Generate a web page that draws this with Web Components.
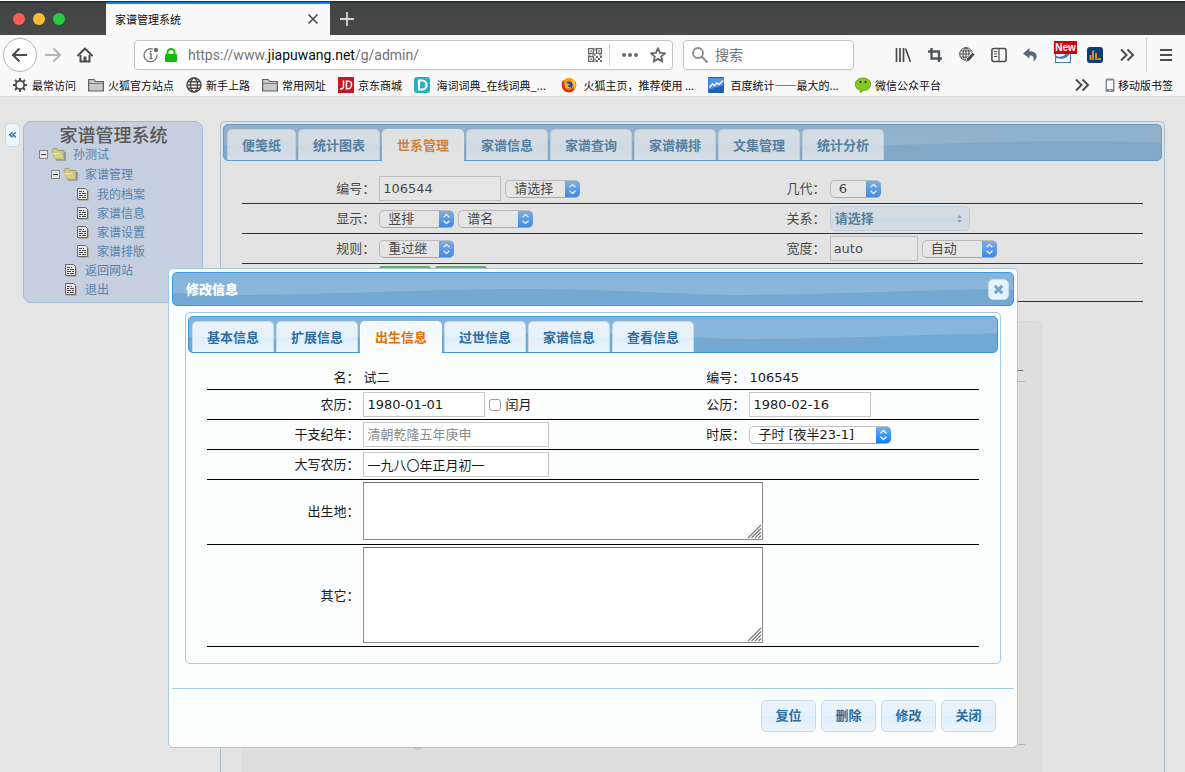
<!DOCTYPE html>
<html lang="zh-CN">
<head>
<meta charset="utf-8">
<title>家谱管理系统</title>
<style>
  html, body { margin: 0; height: 100%; }
  body { font: 13px/20px "DejaVu Sans", "Noto Sans CJK SC", sans-serif; color: #1a1a1a; background: #fff; overflow: hidden; }
</style>
</head>
<body>
<browser-window>
  <genealogy-page></genealogy-page>
</browser-window>

<script>
const wave = `url("data:image/svg+xml,%3Csvg xmlns='http://www.w3.org/2000/svg' width='500' height='38'%3E%3Cdefs%3E%3ClinearGradient id='a' x2='0' y2='1'%3E%3Cstop stop-color='%2386b3d9'/%3E%3Cstop offset='.6' stop-color='%238ab7da'/%3E%3C/linearGradient%3E%3C/defs%3E%3Crect width='500' height='38' fill='url(%23a)'/%3E%3Cpath d='M0 20C20 21 40 22 61 22C160 22 250 16 348 16C400 16 450 18 500 20V38H0z' fill='%2371a8d4'/%3E%3C/svg%3E")`;
const glass = 'linear-gradient(#eaf3fc, #e6f1fb 50%, #dceefc 50%, #edf5fc)';
const steps = (a, b) => `url("data:image/svg+xml,%3Csvg xmlns='http://www.w3.org/2000/svg' width='15' height='18'%3E%3Cdefs%3E%3ClinearGradient id='a' x2='0' y2='1'%3E%3Cstop stop-color='%23${a}'/%3E%3Cstop offset='1' stop-color='%23${b}'/%3E%3C/linearGradient%3E%3C/defs%3E%3Crect width='15' height='18' fill='url(%23a)'/%3E%3Cpath d='M4.5 7.3L7.5 4.4L10.5 7.3M4.5 10.7L7.5 13.6L10.5 10.7' fill='none' stroke='white' stroke-width='1.4'/%3E%3C/svg%3E")`;

const controls = `
  input, select, textarea { font: inherit; color: inherit; margin: 0; }
  input[type=text] { height: 25px; border: 1px solid #c8c8c8; background: #fff; padding: 0 3px; border-radius: 0; width: 122px; }
  input.small { width: 88px; }
  input.long { width: 186px; }
  input::placeholder { color: #8c8c8c; opacity: 1; }
  input[type=checkbox] { appearance: none; width: 12px; height: 12px; border: 1px solid #9c9c9c; border-radius: 3px; background: #fff; }
  select { appearance: none; width: 75px; height: 18px; line-height: 16px; padding: 0 18px 0 8px; border: 1px solid #c2c2c2; border-bottom-color: #aaa; border-right: 0; border-radius: 5px;
    background: ${steps('6db3fa', '0d79fb')} no-repeat right center / 15px 18px border-box #fff; }
  select.tiny { width: 51px; }
  select.wide { width: 142px; }
  select.glass { width: 140px; height: 25px; line-height: 23px; padding: 0 4px; border: 1px solid #c5dbec; font-weight: bold; color: #2e6e9e;
    background: url("data:image/svg+xml,%3Csvg xmlns='http://www.w3.org/2000/svg' width='12' height='12'%3E%3Cpath d='M3 5L5.500 2L8 5zM3 7L5.500 10L8 7z' fill='%236da8d5'/%3E%3C/svg%3E") no-repeat right 3px center, ${glass}; }
  label { white-space: nowrap; }
`;

class Base extends HTMLElement {
  constructor() {
    super();
    const t = document.createElement('template');
    t.innerHTML = `<style>*{box-sizing:border-box}${this.css()}</style>${this.html()}`;
    this.attachShadow({ mode: 'open' }).append(t.content.cloneNode(true));
  }
  css() { return ''; }
  html() { return '<slot></slot>'; }
}

/* ---------- icons ---------- */
const S = 'fill="none" stroke="currentColor"';
const icons = {
  back: `<path d="M1 8H15M7.500 1.500L1 8L7.500 14.500" ${S} stroke-width="2"/>`,
  forward: `<path d="M0 8H14.500M8.500 1.500L15 8L8.500 14.500" ${S} stroke-width="2"/>`,
  home: `<path d="M1 8.500L8 1.500L15 8.500" ${S} stroke-width="2" stroke-linecap="round" stroke-linejoin="round"/><path d="M3.500 8V14.500H12.500V8" ${S} stroke-width="2"/><path d="M6.500 9.500h3v5h-3z" fill="currentColor"/>`,
  close: `<path d="M3.500 3.500L12.500 12.500M12.500 3.500L3.500 12.500" ${S} stroke-width="1.600"/>`,
  plus: `<path d="M8 1V15M1 8H15" ${S} stroke-width="1.800"/>`,
  info: `<path d="M10 2.200A6.500 6.500 0 1 0 14 7.500" ${S} stroke-width="1.200"/><circle cx="13" cy="3" r="2.200" fill="currentColor"/><path d="M6.500 7H8V11.500M6.500 11.500H9.500" ${S} stroke-width="1.400"/><circle cx="7.700" cy="4.600" r="1" fill="currentColor"/>`,
  lock: `<rect x="2" y="7" width="12" height="8" rx="1" fill="#12bc00"/><path d="M4.500 8V5.500a3.500 3.500 0 0 1 7 0V8" fill="none" stroke="#12bc00" stroke-width="2"/>`,
  qr: `<g ${S} stroke-width="1.300"><rect x="1.600" y="1.600" width="4.800" height="4.800"/><rect x="9.600" y="1.600" width="4.800" height="4.800"/><rect x="1.600" y="9.600" width="4.800" height="4.800"/></g><path d="M3.300 3.300h1.500v1.500h-1.500zM11.300 3.300h1.500v1.500h-1.500zM3.300 11.300h1.500v1.500h-1.500zM9 9h2v2H9zM13 9h2v2h-2zM11 11h2v2h-2zM9 13h2v2H9zM13 13h2v2h-2zM7.500 1h1v3h-1zM7.500 6h1v3h-1zM1 7.500h2.500v1H1zM5 7.500h2.500v1H5zM12 7.500h3v1h-3zM7.500 11h1v4h-1z" fill="currentColor"/>`,
  dots: `<circle cx="2" cy="8" r="2" fill="currentColor"/><circle cx="8" cy="8" r="2" fill="currentColor"/><circle cx="14" cy="8" r="2" fill="currentColor"/>`,
  star: `<path d="M8 1.200L10 5.900L15 6.300L11.200 9.600L12.400 14.600L8 11.900L3.600 14.600L4.800 9.600L1 6.300L6 5.900z" ${S} stroke-width="1.900" stroke-linejoin="round"/>`,
  search: `<circle cx="6" cy="6" r="5" ${S} stroke-width="1.800"/><path d="M9.500 9.500L15.500 15.500" ${S} stroke-width="2"/>`,
  library: `<path d="M1.500 1V15M5 1V15M8.500 1V15M10.500 1.500L15.500 15" ${S} stroke-width="1.700"/>`,
  crop: `<path d="M1 4.500H12V15M4.500 1V11.500H15" fill="none" stroke="#4c5866" stroke-width="2.400"/>`,
  globepen: `<g ${S} stroke-width="1"><circle cx="7" cy="7" r="6.300"/><ellipse cx="7" cy="7" rx="3" ry="6.300"/><path d="M7 .700V13.300M.700 7H13.300M1.700 4H12.300M1.700 10H12.300"/></g><path d="M6.500 15.500L7.500 11.500L13.500 5L16 7.500L10.500 14z" fill="currentColor" stroke="#f9f9fa" stroke-width="1"/>`,
  sidebar: `<rect x=".900" y="1.500" width="14.200" height="13" rx="2" ${S} stroke-width="1.600"/><path d="M8 2V14M3 4.500H6.200M3 7H6.200M3 9.500H6.200" ${S} stroke-width="1.200"/>`,
  undo: `<path d="M6.500 1L0 6.500L6.500 11.500V8.600C9.500 8.400 11.500 9.500 10.500 14.500C15.500 11 15 4.500 6.500 4.300z" fill="#56697c"/>`,
  shot: `<path d="M.500 5V15.500H15.500V4" fill="#fff" stroke="#3f7fb6" stroke-width="1.200"/><path d="M0 8C4 11 8 10 12 6H15C13 11 7 13 1 11z" fill="#3f7fb6"/>`,
  bars: `<rect width="16" height="16" rx="3" fill="#0c3f73"/><path d="M3.500 13V8M6 13V3.500M9 13V6M10.500 12.200H14" stroke="#f79a1c" stroke-width="1.700" fill="none"/>`,
  more: `<path d="M2 2.500L7.500 8L2 13.500M8.500 2.500L14 8L8.500 13.500" ${S} stroke-width="2"/>`,
  menu: `<path d="M2 3H14M2 8H14M2 13H14" ${S} stroke-width="2"/>`,
  gear: `<circle cx="8" cy="8" r="4.200" ${S} stroke-width="1.800"/><path d="M8 1V4M8 12V15M1 8H4M12 8H15M3 3L5.200 5.200M10.800 10.800L13 13M3 13L5.200 10.800M10.800 5.200L13 3" ${S} stroke-width="2"/>`,
  folder: `<path d="M.600 14V2.500H6L7.500 4.500H15.400V14z" fill="#c9c9ca" stroke="#616161" stroke-width="1.200"/><path d="M1 6.500H15" stroke="#77777a" stroke-width="1"/>`,
  globe: `<g ${S} stroke-width="1.500"><circle cx="8" cy="8" r="7"/><ellipse cx="8" cy="8" rx="3.500" ry="7"/><path d="M1 8H15M2 4.700H14M2 11.300H14"/></g>`,
  jd: `<rect width="16" height="16" fill="#c81623"/><path d="M5.500 3.500V9.500Q5.500 12.200 2 12M8.500 4.200H10.500Q14 4.500 13.500 8Q13 11.800 9.800 11.800H8.500z" fill="none" stroke="#fff" stroke-width="1.500"/>`,
  dict: `<rect width="16" height="16" rx="3" fill="#28afc0"/><path d="M5 3.500H8A4.500 4.500 0 0 1 8 12.500H5z" fill="none" stroke="#fff" stroke-width="2.200"/>`,
  firefox: `<circle cx="8" cy="8.300" r="7.300" fill="#ff9500"/><path d="M14 4Q17 10 12 14Q7 17 2.500 13Q-.5 9 2 3L4 6Q3 12 8 13Q14 12 13 6z" fill="#e8202e"/><path d="M13 3Q17 9 12.500 14Q14 8 10 3z" fill="#ffc928"/><circle cx="8" cy="8" r="3.600" fill="#2449a8"/><path d="M3 5L7 6.500L9 7.500L6.500 9Q8 11 11 9.500Q8 13 4 10.500z" fill="#ffb31c"/>`,
  tongji: `<rect width="16" height="16" rx="1" fill="#1d5fc4"/><path d="M.500 1H15.500V8L.500 13z" fill="#4f91e6"/><path d="M1.500 10.500L4.500 7L6.500 8.500L9 6L11 7.500L15 3.500" fill="none" stroke="#fff" stroke-width="1.400"/>`,
  wechat: `<path d="M8 1C12.500 1 15.700 3.700 15.700 7.300S12.500 13.500 8.500 13.500L5.200 15.500L5 13C2 12 .300 10 .300 7.300C.300 3.700 3.500 1 8 1z" fill="#86c91a" stroke="#4e8d10" stroke-width=".7"/><circle cx="5.500" cy="5" r="1" fill="#222"/><circle cx="10.500" cy="5" r="1" fill="#222"/>`,
  phone: `<rect x="3.500" y="1.500" width="9" height="13.500" rx="1.500" fill="#808b96"/><path d="M5 3.500h6v8.500H5z" fill="#f9f9fa"/><circle cx="8" cy="13.500" r=".8" fill="#fff"/>`,
  minus: `<rect x="4.500" y="4.500" width="8" height="8" fill="#fff" stroke="#777"/><path d="M6 8.500H11" stroke="#111" stroke-width="1"/>`,
  dir: `<path d="M1 4.500L2.500 2.500H5.500L7 4.500H13V13H4z" fill="#ddd570" stroke="#a59b47" stroke-width="1"/><path d="M14 6V14H5" fill="none" stroke="#6f6a45" stroke-width="1.200"/><path d="M1 7H10.500L13 13H4z" fill="#e8e07c" stroke="#c2b95e" stroke-width=".6"/><path d="M1.500 7.300H9.500" stroke="#fff"/>`,
  doc: `<path d="M4 14.500H13.500V5" fill="none" stroke="#b9b29b" stroke-width="1"/><path d="M2.500 2.500H10.500L12.500 4.500V13.500H2.500z" fill="#fff" stroke="#4c4c4c"/><path d="M4 5.500H7M8 5.500H9M4 7.500H6M7 7.500H11M4 9.500H8M9 9.500H11M4 11.500H6M7 11.500H11" stroke="#222"/>`,
  cross: `<path d="M3.500 3.500L12.500 12.500M12.500 3.500L3.500 12.500" ${S} stroke-width="3.600"/>`,
};
customElements.define('ui-icon', class extends Base {
  static observedAttributes = ['name'];
  css() { return ':host{display:inline-block;width:16px;height:16px;flex:none}svg{display:block;width:100%;height:100%}'; }
  html() { return '<svg viewBox="0 0 16 16" aria-hidden="true"></svg>'; }
  attributeChangedCallback() { this.shadowRoot.querySelector('svg').innerHTML = icons[this.getAttribute('name')]; }
});

/* ---------- browser chrome ---------- */
customElements.define('book-mark', class extends Base {
  css() { return `:host{display:block;flex:none}:host([long]){width:135px}
    a{display:flex;align-items:center;gap:4px;color:#0c0c0d;text-decoration:none;white-space:pre}ui-icon{color:#4c4c4c}
    :host([icon=phone]) a{gap:0}`; }
  html() { return '<a href="#"><ui-icon></ui-icon><slot></slot></a>'; }
  connectedCallback() { this.shadowRoot.querySelector('ui-icon').setAttribute('name', this.getAttribute('icon')); }
});

customElements.define('browser-window', class extends Base {
  css() { return `
    :host{display:flex;flex-direction:column;height:100vh}
    button{border:0;background:none;padding:0;margin:0;color:inherit;display:grid;place-items:center;flex:none}
    .chrome{font:11px/16px "Noto Sans CJK SC",sans-serif;color:#4c4c4c;background:#f9f9fa;flex:none}
    .title{display:flex;height:35px;padding-top:2px;background:linear-gradient(#fff 0 1px,#1d2b2b 1px 2px,#414344 3px,#484848);color:#d8d8d8}
    .lights{width:106px;display:flex;gap:8px;align-items:center;padding-left:13px}
    .lights i{width:12px;height:12px;border-radius:50%;background:#fc5b57}
    .lights i:nth-child(2){background:#fdbc2e}.lights i:nth-child(3){background:#28c840}
    .tab{width:224px;border-top:2px solid #0a84ff;background:#f9f9fa;color:#0c0c0d;display:flex;align-items:center;justify-content:space-between;padding:0 9px 2px}
    .tab button{color:#4c4c4c}
    .new{width:34px}
    .nav{display:flex;align-items:center;height:40px;padding:0 11px 0 3px}
    .back{width:34px;height:34px;border:1px solid #b4b4b6;border-radius:50%;background:#fff}
    .fwd{color:#b6b6b8;margin-left:8px}.home{margin:0 41px 0 16px}
    .field{display:flex;align-items:center;height:30px;background:#fff;border:1px solid #c4c4c6;border-radius:4px;box-shadow:0 1px 3px #0000000d}
    .url{flex:1;padding:0 6px 0 8px;color:#6a6a6a}
    .addr{flex:1;margin-left:9px;min-width:0}
    .addr a,.search input{font:14px/20px Roboto,"Noto Sans CJK SC",sans-serif;color:#737373;text-decoration:none}
    .search input{border:0;padding:0;margin:0;background:none;width:100%;min-width:0;outline:0}
    .addr b{font-weight:400;color:#0c0c0d}
    .bar{width:1px;height:22px;background:#d4d4d6;margin:0 12px 0 6px}
    .search{width:171px;margin-left:10px;padding:0 8px;gap:7px;color:#8a8a8a}
    .tools{display:flex;gap:16px;margin-left:41px}
    .sep{width:1px;height:34px;background:#d7d7db;margin:0 11px}
    .badge{position:relative}.badge span{position:absolute;left:-1px;top:-6px;background:#d70009;color:#fff;font:bold 10px/13px "Liberation Sans",sans-serif;width:23px;text-align:center}
    .marks{display:flex;gap:12px;align-items:center;height:22px;padding:0 12px 2px;border-bottom:1px solid #dcdcdc}
    .grow{flex:1}
    main{flex:1;min-height:0}`; }
  html() { return `
    <header class="chrome">
      <div class="title">
        <div class="lights"><i></i><i></i><i></i></div>
        <div class="tab"><span>家谱管理系统</span><button aria-label="关闭标签页"><ui-icon name="close"></ui-icon></button></div>
        <button class="new" aria-label="新标签页"><ui-icon name="plus"></ui-icon></button>
      </div>
      <nav class="nav">
        <button class="back" aria-label="后退"><ui-icon name="back"></ui-icon></button>
        <button class="fwd" aria-label="前进"><ui-icon name="forward"></ui-icon></button>
        <button class="home" aria-label="主页"><ui-icon name="home"></ui-icon></button>
        <div class="field url">
          <ui-icon name="info"></ui-icon><ui-icon name="lock" style="margin-left:4px"></ui-icon>
          <div class="addr"><a href="#">https://www.<b>jiapuwang.net</b>/g/admin/</a></div>
          <ui-icon name="qr"></ui-icon><span class="bar"></span>
          <button aria-label="页面操作"><ui-icon name="dots"></ui-icon></button>
          <button aria-label="收藏" style="margin-left:12px"><ui-icon name="star"></ui-icon></button>
        </div>
        <div class="field search"><ui-icon name="search"></ui-icon><input type="search" placeholder="搜索" aria-label="搜索"></div>
        <div class="tools">
          <button aria-label="书库"><ui-icon name="library"></ui-icon></button>
          <button aria-label="截图"><ui-icon name="crop"></ui-icon></button>
          <button aria-label="网页编辑"><ui-icon name="globepen"></ui-icon></button>
          <button aria-label="侧栏"><ui-icon name="sidebar"></ui-icon></button>
          <button aria-label="撤销"><ui-icon name="undo"></ui-icon></button>
          <button class="badge" aria-label="扩展"><ui-icon name="shot"></ui-icon><span>New</span></button>
          <button aria-label="统计"><ui-icon name="bars"></ui-icon></button>
          <button aria-label="更多工具"><ui-icon name="more"></ui-icon></button>
        </div>
        <span class="sep"></span>
        <button aria-label="菜单"><ui-icon name="menu"></ui-icon></button>
      </nav>
      <nav class="marks">
        <book-mark icon="gear">最常访问</book-mark>
        <book-mark icon="folder">火狐官方站点</book-mark>
        <book-mark icon="globe">新手上路</book-mark>
        <book-mark icon="folder">常用网址</book-mark>
        <book-mark icon="jd">京东商城</book-mark>
        <book-mark icon="dict" long>&nbsp;海词词典_在线词典_...</book-mark>
        <book-mark icon="firefox" long>&nbsp;火狐主页，推荐使用 ...</book-mark>
        <book-mark icon="tongji" long>&nbsp;百度统计——最大的...</book-mark>
        <book-mark icon="wechat">微信公众平台</book-mark>
        <span class="grow"></span>
        <button aria-label="更多书签"><ui-icon name="more"></ui-icon></button>
        <book-mark icon="phone">移动版书签</book-mark>
      </nav>
    </header>
    <main><slot></slot></main>`; }
});

/* ---------- page widgets ---------- */
customElements.define('ui-tabs', class extends Base {
  css() { return `
    :host{display:block;border:1px solid #a6c9e2;border-radius:5px;background:#fcfdfd;padding:3px 2px}
    .head{display:flex;gap:2px;height:37px;padding:4px 3px 0;border:1px solid #4297d7;border-radius:5px;background:${wave} #71a8d4}
    ::slotted([slot=tab]){height:31px;margin:0;padding:0 14px 1px;white-space:nowrap;border:1px solid #c5dbec;border-bottom:0;border-radius:5px 5px 0 0;background:${glass};color:#2e6e9e;font:bold 13px/20px "Noto Sans CJK SC",sans-serif}
    ::slotted([aria-selected=true]){height:32px;padding-bottom:2px;border-color:#fff;background:linear-gradient(#f4f8fa,#fcfdfd);color:#e17009}
    .body{padding:13px 19px}`; }
  html() { return '<div class="head" role="tablist"><slot name="tab"></slot></div><div class="body"><slot></slot></div>'; }
});

/* One ruled line of a form; its children alternate label cell, control cell. */
customElements.define('form-row', class extends Base {
  css() { return `
    :host{display:grid;grid-template-columns:var(--cols);min-height:var(--row,30px);border-bottom:1px solid #000;align-items:center}
    ::slotted(label),::slotted(.label){padding-right:2px;text-align:right}
    ::slotted(div){padding-left:2px;display:flex;align-items:center;gap:var(--gap,4px);white-space:nowrap}
    ::slotted(.span){grid-column:span 3}
    :host([tall]) ::slotted(div){align-self:start;padding-top:2px}`; }
});

customElements.define('side-tree', class extends Base {
  css() { return `
    :host{display:block;width:180px;height:182px;flex:none;border:1px solid #a3bfe8;border-radius:8px;background:#d3e0f7;padding:2px 14px 0 15px}
    h1{font:500 18px/20px "Noto Sans CJK SC",sans-serif;color:#333;margin:0;text-align:center}
    ul{list-style:none;margin:0;padding:0}ul ul{padding-left:12px;margin-top:1px}
    div{display:flex;align-items:center;height:19px;font:12px/19px "Noto Sans CJK SC",sans-serif}
    a{color:#2f6fae;text-decoration:none;margin-left:6px}
    .leaf{padding-left:12px}
    ui-icon[name=minus]{margin-left:-4px}`; }
  html() {
    const dir = t => `<div><ui-icon name="minus"></ui-icon><ui-icon name="dir"></ui-icon><a href="#">${t}</a></div>`;
    const leaf = t => `<li><div class="leaf"><ui-icon name="doc"></ui-icon><a href="#">${t}</a></div></li>`;
    return `<h1>家谱管理系统</h1><ul><li>${dir('孙测试')}<ul><li>${dir('家谱管理')}<ul>
      ${['我的档案', '家谱信息', '家谱设置', '家谱排版'].map(leaf).join('')}</ul></li>${['返回网站', '退出'].map(leaf).join('')}</ul></li></ul>`;
  }
});

const tabs = (names, on) => names.map((n, i) => `<button slot="tab" role="tab" aria-selected="${i === on}">${n}</button>`).join('');

customElements.define('lineage-panel', class extends Base {
  css() { return `${controls}
    :host{display:block;flex:1;min-width:0;height:100%}
    ui-tabs{--cols:15% 35% 15% 35%;height:100%;border-bottom:0;border-radius:5px 5px 0 0;padding-top:2px}
    .go{width:52px;height:34px;border:0;border-radius:3px;background:#4cae4c}
    .actions{--row:38px}
    .chart{width:800px;height:520px;margin-top:19px;background:#f5f5f5;border:1px solid #eee;border-radius:4px}
    .chart svg{display:block;width:100%;height:100%}`; }
  html() { return `
    <ui-tabs>
      ${tabs(['便笺纸', '统计图表', '世系管理', '家谱信息', '家谱查询', '家谱横排', '文集管理', '统计分析'], 2)}
      <form-row>
        <label for="no">编号：</label><div><input id="no" type="text" value="106544"><select aria-label="编号选项"><option>请选择</option></select></div>
        <label for="gen">几代：</label><div><select id="gen" class="tiny"><option>6</option></select></div>
      </form-row>
      <form-row>
        <label for="show">显示：</label><div><select id="show"><option>竖排</option></select><select aria-label="名称"><option>谱名</option></select></div>
        <label for="rel">关系：</label><div><select id="rel" class="glass"><option>请选择</option></select></div>
      </form-row>
      <form-row>
        <label for="rule">规则：</label><div><select id="rule"><option>重过继</option></select></div>
        <label for="width">宽度：</label><div><input id="width" class="small" type="text" value="auto"><select aria-label="宽度选项"><option>自动</option></select></div>
      </form-row>
      <form-row class="actions"><span class="label"></span><div class="span"><button class="go"></button><button class="go"></button></div></form-row>
      <div class="chart"><svg viewBox="0 0 798 518" fill="none" aria-hidden="true">
        <path d="M20 59.500H782M20 422.500H782" stroke="#bbb"/><path d="M20 48.500H780" stroke="#555"/><circle cx="175" cy="418" r="9" stroke="#bbb"/>
      </svg></div>
    </ui-tabs>`; }
});

customElements.define('ui-dialog', class extends Base {
  css() { return `
    :host{display:block;flex:1;min-width:0;border:1px solid #a6c9e2;border-radius:5px;background:#fcfdfd;padding:3px}
    header{display:flex;align-items:center;justify-content:space-between;height:34px;padding:0 4px 0 13px;border:1px solid #4297d7;border-radius:5px;background:${wave} #71a8d4;color:#fff}
    h2{font:900 13px/20px "Noto Sans CJK SC",sans-serif;margin:0}
    header button{width:21px;height:21px;padding:0;display:grid;place-items:center;border:1px solid #c5dbec;border-radius:5px;background:${glass};color:#6da8d5}
    header ui-icon{width:13px;height:13px}
    .content{padding:6px 13px 24px}
    footer{display:flex;justify-content:flex-end;gap:5px;border-top:1px solid #a6c9e2;padding:11px 18px 12px}
    ::slotted(button){width:55px;height:32px;margin:0;padding:0 0 2px;border:1px solid #c5dbec;border-radius:5px;background:${glass};color:#2e6e9e;font:bold 13px/20px "Noto Sans CJK SC",sans-serif}`; }
  html() { return `<header><h2></h2><button aria-label="关闭窗口"><ui-icon name="cross"></ui-icon></button></header>
    <div class="content"><slot></slot></div><footer><slot name="action"></slot></footer>`; }
  connectedCallback() { this.setAttribute('role', 'dialog'); this.shadowRoot.querySelector('h2').textContent = this.getAttribute('heading'); }
});

customElements.define('birth-dialog', class extends Base {
  css() { return `${controls}
    :host{display:flex;flex:1;min-width:0}
    ui-tabs{--cols:20% 30% 20% 30%}
    .name{--row:24px}.place{--row:65px}.other{--row:102px}
    textarea{width:400px;height:58px;border:1px solid #8c8c8c;border-top-color:#6c6c6c;background:#fff;resize:none;display:block}
    .area{position:relative;width:400px}
    .area svg{position:absolute;right:1px;bottom:1px;width:15px;height:15px}
    .other textarea{height:96px}`; }
  html() {
    const area = id => `<div class="span"><span class="area"><textarea id="${id}"></textarea><svg viewBox="0 0 15 15" aria-hidden="true"><path d="M1 14L14 1M4.500 14L14 4.500M8 14L14 8M11.500 14L14 11.500" stroke="#777" stroke-width="1.200"/></svg></span></div>`;
    return `
    <ui-dialog heading="修改信息">
      <ui-tabs>
        ${tabs(['基本信息', '扩展信息', '出生信息', '过世信息', '家谱信息', '查看信息'], 2)}
        <form-row class="name"><span class="label">名：</span><div>试二</div><span class="label">编号：</span><div>106545</div></form-row>
        <form-row>
          <label for="lunar">农历：</label><div><input id="lunar" type="text" value="1980-01-01"><input id="leap" type="checkbox"><label for="leap">闰月</label></div>
          <label for="solar">公历：</label><div><input id="solar" type="text" value="1980-02-16"></div>
        </form-row>
        <form-row>
          <label for="ganzhi">干支纪年：</label><div><input id="ganzhi" class="long" type="text" placeholder="清朝乾隆五年庚申"></div>
          <label for="hour">时辰：</label><div><select id="hour" class="wide"><option>子时 [夜半23-1]</option></select></div>
        </form-row>
        <form-row><label for="upper">大写农历：</label><div class="span"><input id="upper" class="long" type="text" value="一九八〇年正月初一"></div></form-row>
        <form-row class="place" tall><label for="place">出生地：</label>${area('place')}</form-row>
        <form-row class="other" tall><label for="other">其它：</label>${area('other')}</form-row>
      </ui-tabs>
      ${['复位', '删除', '修改', '关闭'].map(t => `<button slot="action">${t}</button>`).join('')}
    </ui-dialog>`;
  }
});

customElements.define('genealogy-page', class extends Base {
  css() { return `
    :host{display:block;position:relative;height:100%;overflow:hidden}
    .page{display:flex;align-items:flex-start;height:100%;padding:24px 20px 0 5px}
    .fold{position:relative;z-index:1;width:15px;height:24px;margin:2px 3px 0 0;padding:0 0 2px;border:1px solid #c5dbec;border-radius:5px;background:#eef6fe;color:#2e6e9e;font:bold 14px/20px "DejaVu Sans",sans-serif;flex:none;display:grid;place-items:center}
    side-tree{margin-right:17px}
    .overlay{position:absolute;inset:0;background:#aaaaaa4d}
    .modal{position:absolute;inset:0;display:flex;align-items:flex-start;padding:171px 167px 0 168px;pointer-events:none}
    birth-dialog{pointer-events:auto}`; }
  html() { return `
    <div class="page"><button class="fold">«</button><side-tree></side-tree><lineage-panel></lineage-panel></div>
    <div class="overlay"></div>
    <div class="modal"><birth-dialog></birth-dialog></div>`; }
});
</script>
</body>
</html>
